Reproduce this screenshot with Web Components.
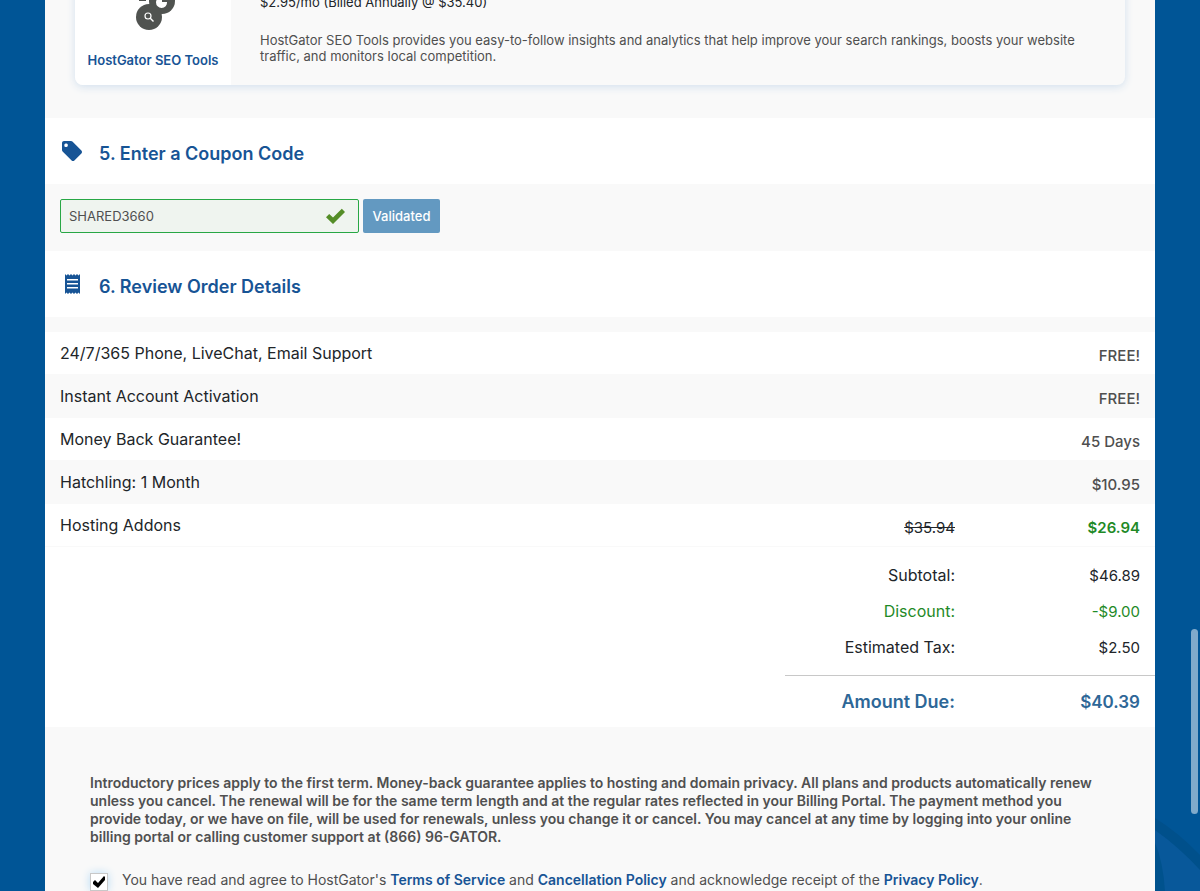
<!DOCTYPE html>
<html lang="en">
<head>
<meta charset="utf-8">
<meta name="viewport" content="width=device-width, initial-scale=1">
<title>HostGator – Order</title>
<style>
html{height:100%;background:#005596}
body{margin:0;height:100%;overflow:hidden;font-family:Inter,"Liberation Sans",sans-serif;font-size:16px;color:#212529;
--blue:#175495;--grey:#f9f9f9;--green:#1f8a27;--muted:#4f4f4f}
</style>
</head>
<body>
<order-page></order-page>
<script>
function define(name, html){
  const t=document.createElement('template');
  t.innerHTML=html;
  customElements.define(name,class extends HTMLElement{
    constructor(){super();this.attachShadow({mode:'open'}).append(t.content.cloneNode(true));}
  });
}

define('addon-card',`
<style>
:host{display:flex;align-items:flex-end;height:118px;box-sizing:border-box;padding:0 30px 33px;overflow:hidden;background:var(--grey)}
article{flex:1;display:flex;border-radius:8px;height:180px;box-shadow:0 2px 8px #d3e0ee;background:var(--grey)}
.tile{width:156px;box-sizing:border-box;display:flex;flex-direction:column;justify-content:flex-end;align-items:center;gap:21px;background:#fff;border-radius:8px 0 0 8px;padding-bottom:16px}
h3{margin:0;font-size:13px;line-height:18px;font-weight:600;color:var(--blue)}
.info{flex:1;display:flex;flex-direction:column;justify-content:flex-end;gap:21px;padding:0 29px 21px;font-size:13px;line-height:16px}
p{margin:0}.price{line-height:18px}.about{color:var(--muted)}
svg{display:block}
</style>
<article>
 <div class="tile">
  <svg width="46" height="46" viewBox="0 0 46 46" aria-hidden="true">
   <circle cx="32" cy="17" r="13" fill="#505350"/><circle cx="19" cy="33" r="13" fill="#505350"/>
   <path d="M9 16h7" stroke="#505350" stroke-width="2"/>
   <path d="M32 13v5h5A5.500 5.500 0 1 1 32 13z" fill="#fff"/>
   <circle cx="18" cy="32" r="3" fill="none" stroke="#fff" stroke-width="1.2"/><path d="M20.300 34.300l3.200 3.200" stroke="#fff" stroke-width="1.400"/>
  </svg>
  <h3><slot name="name"></slot></h3>
 </div>
 <div class="info"><p class="price"><slot name="price"></slot></p><p class="about"><slot></slot></p></div>
</article>`);

define('section-heading',`
<style>
:host{display:flex;align-items:center;height:66px;background:#fff;padding:0 15px;gap:15px;color:var(--blue)}
.icon{display:flex;width:24px;height:24px}
h2{margin:6px 0 0;font-size:18px;line-height:24px;font-weight:600}
</style>
<div class="icon"><slot name="icon"></slot></div><h2><slot></slot></h2>`);

define('coupon-form',`
<style>
:host{display:block;background:var(--grey);padding:15px 15px 18px}
form{display:flex;gap:4px}
.field{position:relative;width:299px}
input{box-sizing:border-box;width:100%;height:34px;border:1px solid #28a745;border-radius:2px;background:#eff4ef;color:var(--muted);font:13px Inter,sans-serif;padding:0 40px 0 8px;outline:0;display:block}
svg{position:absolute;right:14px;top:9px}
button{width:77px;height:34px;border:0;border-radius:2px;background:#6399c1;color:#fff;font:500 13px Inter,sans-serif;padding:0}
</style>
<form><div class="field"><input id="code" aria-label="Coupon code" value="SHARED3660">
<svg width="19" height="16" viewBox="0 0 19 16" aria-hidden="true"><path d="M0 9.300L3.200 6.100 7 9.600 15.800.8 19 4 7 16z" fill="#548d27"/></svg></div>
<button type="button">Validated</button></form>`);

define('order-summary',`
<style>
:host{display:block;border-top:15px solid var(--grey);background:#fff}
table{width:100%;border-collapse:separate;border-spacing:0;table-layout:fixed}
.mid,.amt{width:185px}
th,td{box-sizing:border-box;padding:0 15px;font-weight:400;text-align:right;white-space:nowrap}
.lines th{text-align:left}
.lines tr{height:43px}
.lines th,.lines td{border-bottom:1px solid var(--grey);line-height:20px;vertical-align:top;padding-top:11px}
.lines td{padding-top:14px;font-size:15px;font-weight:500;color:var(--muted)}
.lines tr:nth-child(even)>*{background:var(--grey)}
.lines .was{font-weight:400;color:#212529;text-decoration:line-through}
.lines .now{color:var(--green);font-weight:600}
.totals tr{height:36px}
.totals td{font-size:15px}
.totals tr:first-child>*{padding-top:10px}
.totals tr:first-child{height:46px}
.totals .off>*{color:var(--green)}
.totals .tax>*{padding-bottom:10px}
.totals .tax{height:46px}
.totals .due{height:52px}
.totals .due>*{font-size:18px;color:#2e6797;font-weight:600}
.totals .due td{font-size:17px}
.totals .due .line{border-top:1px solid #c8c8c8}
</style>
<table>
<colgroup><col><col class="mid"><col class="amt"></colgroup>
<tbody class="lines">
<tr><th scope="row">24/7/365 Phone, LiveChat, Email Support</th><td></td><td>FREE!</td></tr>
<tr><th scope="row">Instant Account Activation</th><td></td><td>FREE!</td></tr>
<tr><th scope="row">Money Back Guarantee!</th><td></td><td>45 Days</td></tr>
<tr><th scope="row">Hatchling: 1 Month</th><td></td><td>$10.95</td></tr>
<tr><th scope="row">Hosting Addons</th><td class="was">$35.94</td><td class="now">$26.94</td></tr>
</tbody>
<tbody class="totals">
<tr><td></td><th scope="row">Subtotal:</th><td>$46.89</td></tr>
<tr class="off"><td></td><th scope="row">Discount:</th><td>-$9.00</td></tr>
<tr class="tax"><td></td><th scope="row">Estimated Tax:</th><td>$2.50</td></tr>
<tr class="due"><td></td><th class="line" scope="row">Amount Due:</th><td class="line">$40.39</td></tr>
</tbody></table>`);

define('order-terms',`
<style>
:host{display:block;flex:1;background:var(--grey);padding:47px 45px 0;color:var(--muted);font-size:14px;line-height:18px}
p{margin:0 0 24px;font-weight:600;white-space:nowrap;color:#505050}
label{display:flex;gap:14px;align-items:flex-start;white-space:nowrap;line-height:20px}
.box{position:relative;width:18px;height:18px;margin-top:3px}
input{appearance:none;display:block;box-sizing:border-box;width:18px;height:18px;margin:0;background:#fff;border:1px solid #c8c8c8;box-shadow:0 0 8px #b9dcf5}
.box svg{position:absolute;left:2px;top:3px;pointer-events:none}
.box input:not(:checked)+svg{display:none}
a{color:var(--blue);text-decoration:none;font-weight:600}
</style>
<p>Introductory prices apply to the first term. Money-back guarantee applies to hosting and domain privacy. All plans and products automatically renew<br>unless you cancel. The renewal will be for the same term length and at the regular rates reflected in your Billing Portal. The payment method you<br>provide today, or we have on file, will be used for renewals, unless you change it or cancel. You may cancel at any time by logging into your online<br>billing portal or calling customer support at (866) 96-GATOR.</p>
<label for="agree"><span class="box"><input type="checkbox" id="agree" checked><svg width="14" height="12" viewBox="0 0 14 12" aria-hidden="true"><path d="M1 6l2-2 3 3 6-7 1 1v3l-7 8L1 8z"/></svg></span><span>You have read and agree to HostGator's <a href="#terms">Terms of Service</a> and <a href="#cancel">Cancellation Policy</a> and acknowledge receipt of the <a href="#privacy">Privacy Policy</a>.</span></label>`);

define('order-page',`
<style>
:host{display:block;position:relative;height:100%;background:#005596;overflow:hidden}
main{position:relative;display:flex;flex-direction:column;height:100%;margin:0 45px}
.art{position:absolute;right:0;bottom:0}
.thumb{position:absolute;right:2px;top:629px;width:7px;height:185px;border-radius:4px;background:#80aacb}
svg{display:block}
</style>
<svg class="art" width="45" height="74" viewBox="0 0 45 74" aria-hidden="true"><path d="M0 13Q23 29 45 52V74H0z" fill="#08589a"/><path d="M0 1Q24 16 45 38V53Q23 29 0 13z" fill="#00508b"/><path d="M0 26Q8 44 10 74H0z" fill="#00528d"/></svg>
<main>
<addon-card><span slot="name">HostGator SEO Tools</span><span slot="price">$2.95/mo (Billed Annually @ $35.40)</span>HostGator SEO Tools provides you easy-to-follow insights and analytics that help improve your search rankings, boosts your website traffic, and monitors local competition.</addon-card>
<section-heading><svg slot="icon" width="24" height="24" viewBox="0 0 24 24" fill="currentColor" aria-hidden="true"><path d="M21.400 11.600l-9-9C12.100 2.200 11.600 2 11 2H4C2.900 2 2 2.900 2 4v7c0 .6.200 1.100.6 1.400l9 9c.4.400.9.600 1.400.6s1-.2 1.400-.6l7-7c.4-.4.6-.9.6-1.400s-.2-1-.6-1.400zM6.500 8a1.800 1.800 0 1 1 0-3.500 1.800 1.800 0 0 1 0 3.500z"/></svg>5. Enter a Coupon Code</section-heading>
<coupon-form></coupon-form>
<section-heading><svg slot="icon" width="24" height="24" viewBox="0 0 24 24" fill="currentColor" aria-hidden="true"><path d="M5 2l1.500 1.500L8 2l1.500 1.500L11 2l1.500 1.500L14 2l1.500 1.500L17 2l1.500 1.500L20 2v20l-1.500-1.500L17 22l-1.500-1.500L14 22l-1.500-1.500L11 22l-1.500-1.500L8 22l-1.500-1.500L5 22zM7 7v1.500h11V7zm0 4v1.500h11V11zm0 4v1.500h11V15z" fill-rule="evenodd"/></svg>6. Review Order Details</section-heading>
<order-summary></order-summary>
<order-terms></order-terms>
</main>
<div class="thumb" aria-hidden="true"></div>`);
</script>
</body>
</html>
